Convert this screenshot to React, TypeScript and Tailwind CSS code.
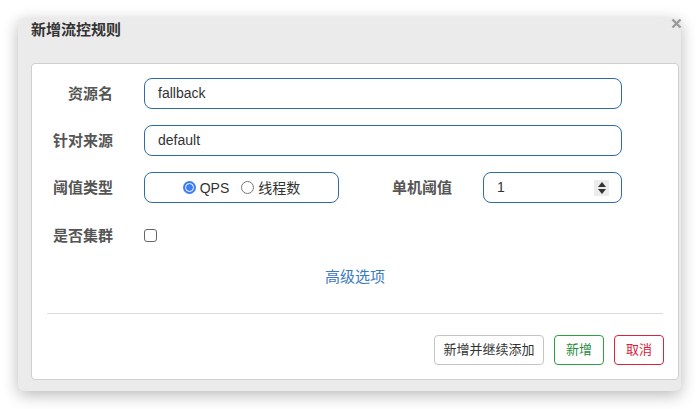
import React from 'react';

const font = { fontFamily: '"Liberation Sans", "Noto Sans CJK SC", sans-serif' };

function Label({ text, width }: { text: string; width: string }) {
  return (
    <div className={`${width} shrink-0 text-right pr-[31px] text-[15px] font-bold text-[#555] leading-[20px]`}>
      {text}
    </div>
  );
}

function Radio({ checked, label }: { checked: boolean; label: string }) {
  return (
    <div className="flex items-center gap-[4px]">
      {checked ? (
        <span className="w-[13px] h-[13px] rounded-full bg-[#3a7df6] flex items-center justify-center">
          <span className="w-[9px] h-[9px] rounded-full border-[1.5px] border-white bg-[#3a7df6]" />
        </span>
      ) : (
        <span className="w-[13px] h-[13px] rounded-full border border-[#777] bg-white" />
      )}
      <span className="text-[14px] text-[#333] leading-[20px]">{label}</span>
    </div>
  );
}

export default function App() {
  return (
    <div className="w-[699px] h-[409px] bg-white p-[18px]" style={font}>
      <div className="relative w-[663px] h-[373px] bg-[#ebebeb] rounded-[6px] shadow-[0_4px_16px_rgba(0,0,0,0.28)] pl-[13px]">
        {/* close */}
        <svg className="absolute right-[-1px] top-[0px]" width="11" height="11" viewBox="0 0 11 11">
          <path d="M1.5 1.5 L9.5 9.5 M9.5 1.5 L1.5 9.5" stroke="#9a9a9a" strokeWidth="2.4" />
        </svg>

        <div className="h-[45px] pt-[2px] text-[15px] font-bold text-[#333] leading-[20px]">新增流控规则</div>

        <div className="w-[648px] h-[317px] bg-white border border-[#cfcfcf] rounded-[4px] flex flex-col">
          <div className="pt-[14px] flex flex-col gap-[16px]">
            <div className="flex items-center">
              <Label text="资源名" width="w-[112px]" />
              <div className="w-[478px] h-[31px] border border-[#2d6ca8] rounded-[8px] flex items-center pl-[13px] text-[14px] text-[#333]">
                fallback
              </div>
            </div>
            <div className="flex items-center">
              <Label text="针对来源" width="w-[112px]" />
              <div className="w-[478px] h-[31px] border border-[#2d6ca8] rounded-[8px] flex items-center pl-[13px] text-[14px] text-[#333]">
                default
              </div>
            </div>
            <div className="flex items-center">
              <Label text="阈值类型" width="w-[112px]" />
              <div className="w-[195px] h-[31px] border border-[#2d6ca8] rounded-[8px] flex items-center justify-center gap-[12px]">
                <Radio checked label="QPS" />
                <Radio checked={false} label="线程数" />
              </div>
              <Label text="单机阈值" width="w-[144px]" />
              <div className="w-[139px] h-[31px] border border-[#2d6ca8] rounded-[8px] flex items-center justify-between pl-[13px] pr-[12px] text-[14px] text-[#333]">
                <span>1</span>
                <span className="w-[15px] h-[16px] bg-[#ececec] flex flex-col items-center justify-center gap-[2px]">
                  <svg width="8" height="5" viewBox="0 0 8 5"><path d="M4 0 L8 5 L0 5 Z" fill="#333" /></svg>
                  <svg width="8" height="5" viewBox="0 0 8 5"><path d="M0 0 L8 0 L4 5 Z" fill="#333" /></svg>
                </span>
              </div>
            </div>
            <div className="flex items-center h-[31px] mt-[1px]">
              <Label text="是否集群" width="w-[112px]" />
              <span className="w-[13px] h-[13px] border border-[#666] rounded-[3px] bg-white" />
            </div>
          </div>

          <div className="mt-[16px] text-center text-[15px] text-[#3b7bc0] leading-[20px]">高级选项</div>

          <div className="mx-[15px] mt-[26px] border-t border-[#dcdcdc]" />

          <div className="flex justify-end gap-[10px] pr-[14px] mt-[21px]">
            <div className="w-[110px] h-[30px] border border-[#c4c4c4] rounded-[4px] flex items-center justify-center text-[13px] text-[#333]">
              新增并继续添加
            </div>
            <div className="w-[50px] h-[30px] border border-[#2aa041] rounded-[4px] flex items-center justify-center text-[13px] text-[#2a8a3c]">
              新增
            </div>
            <div className="w-[50px] h-[30px] border border-[#e0213a] rounded-[4px] flex items-center justify-center text-[13px] text-[#d9213a]">
              取消
            </div>
          </div>
        </div>
      </div>
    </div>
  );
}
